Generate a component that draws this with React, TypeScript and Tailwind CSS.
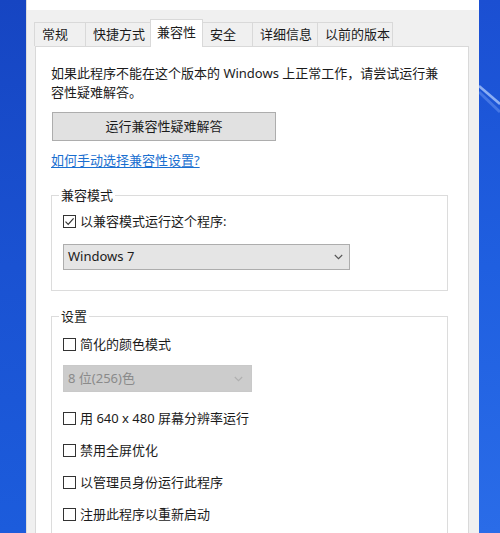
import React from "react";

const tabs = [
  { label: "常规", w: "w-[52px]" },
  { label: "快捷方式", w: "w-[66px]" },
  { label: "兼容性", w: "w-[53px]", active: true },
  { label: "安全", w: "w-[51px]" },
  { label: "详细信息", w: "w-[66px]" },
  { label: "以前的版本", w: "w-[76px]" },
];

function CheckBox({ checked = false }: { checked?: boolean }) {
  return (
    <span className="flex h-[13px] w-[13px] shrink-0 items-center justify-center border border-[#333333] bg-white">
      {checked ? (
        <svg width="11" height="11" viewBox="0 0 11 11" fill="none">
          <path d="M1.5 5.6 L4.2 8.3 L9.6 2.4" stroke="#333" strokeWidth="1.2" />
        </svg>
      ) : null}
    </span>
  );
}

function CheckRow({ label, checked, className = "" }: { label: string; checked?: boolean; className?: string }) {
  return (
    <div className={`flex h-[19px] items-center gap-[4px] ${className}`}>
      <CheckBox checked={checked} />
      <span className="leading-[19px]">{label}</span>
    </div>
  );
}

function Chevron({ color }: { color: string }) {
  return (
    <svg width="9" height="6" viewBox="0 0 9 6" fill="none">
      <path d="M0.8 1 L4.5 4.7 L8.2 1" stroke={color} strokeWidth="1.1" />
    </svg>
  );
}

export default function App() {
  return (
    <div className="relative flex h-[533px] w-[500px] overflow-hidden bg-[#1a50d4] font-['Noto_Sans','Noto_Sans_CJK_SC',sans-serif] text-[13px] text-[#1b1b1b]">
      <div className="w-[26px] shrink-0 bg-gradient-to-b from-[#1645c2] via-[#1a52d2] to-[#1c5cdc]" />

      <div className="flex w-[453px] shrink-0 flex-col border-l border-[#dcdcdc] bg-[#f0f0f0]">
        <div className="h-[10px] shrink-0 bg-white" />

        {/* tabs */}
        <div className="flex h-[36px] shrink-0 items-end pl-[8px]">
          {tabs.map((t) =>
            t.active ? (
              <div
                key={t.label}
                className={`relative z-10 -mb-px -ml-px flex h-[28px] ${t.w} items-start border-x border-t border-[#d9d9d9] bg-white pl-[6px] pt-[3px] leading-[19px]`}
              >
                {t.label}
              </div>
            ) : (
              <div
                key={t.label}
                className={`-ml-px flex h-[24px] ${t.w} items-center border-x border-t border-[#d9d9d9] bg-[#f0f0f0] pl-[7px] leading-[19px]`}
              >
                {t.label}
              </div>
            ),
          )}
        </div>

        {/* panel */}
        <div className="ml-[8px] mr-[10px] flex-1 border border-[#d9d9d9] bg-white pl-[15px] pt-[17px]">
          <p className="leading-[19px]">
            如果此程序不能在这个版本的 Windows 上正常工作，请尝试运行兼
            <br />
            容性疑难解答。
          </p>

          <button
            type="button"
            className="ml-px mt-[10px] flex h-[29px] w-[224px] items-center justify-center border border-[#adadad] bg-[#e1e1e1]"
          >
            运行兼容性疑难解答
          </button>

          <p className="mt-[10px] leading-[19px] text-[#1a6fd0] underline underline-offset-2">
            如何手动选择兼容性设置?
          </p>

          <fieldset className="mt-[16px] w-[397px] border border-[#dcdcdc] p-0">
            <legend className="ml-[7px] px-[2px] leading-[19px]">兼容模式</legend>
            <div className="pb-[20px] pl-[11px] pt-[7px]">
              <CheckRow label="以兼容模式运行这个程序:" checked />
              <div className="mt-[13px] flex h-[26px] w-[287px] items-center justify-between border border-[#adadad] bg-[#e5e5e5] pl-[4px] pr-[6px]">
                <span>Windows 7</span>
                <Chevron color="#555555" />
              </div>
            </div>
          </fieldset>

          <fieldset className="mt-[16px] w-[397px] border border-[#dcdcdc] p-0">
            <legend className="ml-[7px] px-[2px] leading-[19px]">设置</legend>
            <div className="pb-[20px] pl-[11px] pt-[9px]">
              <CheckRow label="简化的颜色模式" />
              <div className="mt-[11px] flex h-[27px] w-[189px] items-center justify-between border border-[#c9c9c9] bg-[#cccccc] pl-[4px] pr-[8px] text-[#8a8a8a]">
                <span>8 位(256)色</span>
                <Chevron color="#b0b0b0" />
              </div>
              <CheckRow className="mt-[17px]" label="用 640 x 480 屏幕分辨率运行" />
              <CheckRow className="mt-[13px]" label="禁用全屏优化" />
              <CheckRow className="mt-[13px]" label="以管理员身份运行此程序" />
              <CheckRow className="mt-[13px]" label="注册此程序以重新启动" />
            </div>
          </fieldset>
        </div>
      </div>

      <div className="relative flex-1 bg-gradient-to-b from-[#1b4fd2] via-[#1f5fe0] to-[#2a6ce8]">
        <svg className="absolute inset-0 h-full w-full" viewBox="0 0 21 533" preserveAspectRatio="none">
          <path d="M0 86 L21 104" stroke="#bcd4ff" strokeWidth="2.5" opacity="0.7" />
          <path d="M0 92 L21 112" stroke="#8fb5ff" strokeWidth="3" opacity="0.35" />
        </svg>
      </div>
    </div>
  );
}
